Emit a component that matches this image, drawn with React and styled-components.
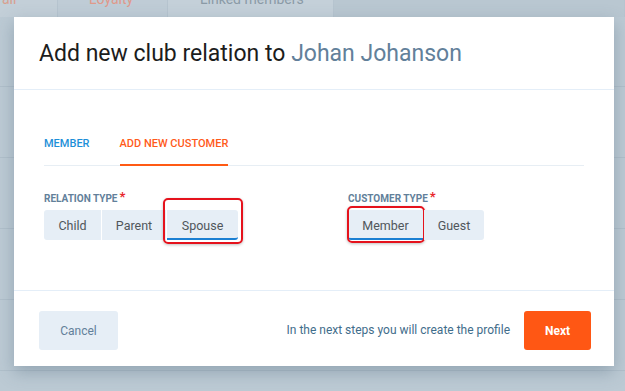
import React from 'react';
import styled, { createGlobalStyle } from 'styled-components';

const GlobalStyle = createGlobalStyle`
  html, body {
    margin: 0;
    padding: 0;
    background: #bccad4;
    font-family: Roboto, "Liberation Sans", Arial, sans-serif;
  }
`;

const Page = styled.div`
  position: relative;
  width: 625px;
  height: 391px;
  overflow: hidden;
  background: #bccad4;
`;

const TabStrip = styled.div`
  display: flex;
  height: 17px;
  overflow: hidden;
`;

const BackTab = styled.div`
  width: ${(p) => p.w}px;
  background: ${(p) => p.bg};
  border-right: 1px solid #b6c4cf;
  color: ${(p) => p.color};
  font-size: 14px;
  line-height: 1;
  padding-left: ${(p) => p.pad}px;
  box-sizing: border-box;
  margin-top: -8px;
  height: 25px;
`;

const Rows = styled.div`
  display: flex;
  flex-direction: column;
`;

const BackRow = styled.div`
  height: 70px;
  border-bottom: 1px solid #b0bfca;
  &:first-child {
    height: 69px;
  }
`;

const Modal = styled.div`
  position: absolute;
  left: 14px;
  top: 17px;
  width: 600px;
  height: 349px;
  background: #fff;
  box-shadow: 0 6px 16px rgba(70, 95, 115, 0.35);
  display: flex;
  flex-direction: column;
`;

const Header = styled.div`
  height: 72px;
  border-bottom: 1px solid #e4eef8;
  padding: 0 25px;
  display: flex;
  align-items: center;
`;

const Title = styled.h2`
  margin: 0;
  margin-top: 1px;
  font-size: 23px;
  font-weight: 400;
  color: #1c1c1c;
`;

const Name = styled.span`
  color: #62809a;
`;

const Body = styled.div`
  flex: 1;
  padding: 47px 30px 0;
`;

const TabBar = styled.div`
  display: flex;
  gap: 30px;
  border-bottom: 1px solid #e7eef4;
`;

const Tab = styled.div`
  font-size: 11px;
  line-height: 13px;
  font-weight: 500;
  text-transform: uppercase;
  color: ${(p) => (p.active ? '#ff5a1a' : '#1d8fd8')};
  padding-bottom: 14px;
  border-bottom: 2px solid ${(p) => (p.active ? '#ff5a14' : 'transparent')};
  margin-bottom: -1px;
`;

const Fields = styled.div`
  display: flex;
  margin-top: 27px;
`;

const Field = styled.div`
  width: ${(p) => p.w}px;
`;

const Label = styled.div`
  font-size: 10px;
  font-weight: 700;
  color: #62809a;
  text-transform: uppercase;
  height: 13px;
  margin-bottom: 4px;
  display: flex;
  align-items: flex-start;
  gap: 2px;
`;

const Star = styled.span`
  color: #e8262b;
  font-size: 13px;
  line-height: 1;
  margin-top: -3px;
`;

const Group = styled.div`
  display: flex;
  gap: 1px;
`;

const Choice = styled.div`
  position: relative;
  height: 30px;
  width: ${(p) => p.w}px;
  box-sizing: border-box;
  background: #e6eef6;
  font-size: 12.5px;
  color: #50565b;
  display: flex;
  align-items: center;
  justify-content: center;
  border-radius: ${(p) => p.radius};
  border-bottom: 2px solid ${(p) => (p.selected ? '#1a7fd2' : 'transparent')};
  padding-top: 2px;
`;

const Highlight = styled.div`
  position: absolute;
  left: ${(p) => p.box[0]}px;
  right: ${(p) => p.box[1]}px;
  top: ${(p) => p.box[2]}px;
  bottom: ${(p) => p.box[3]}px;
  border: 2px solid #e5121c;
  border-radius: 5px;
  box-shadow: 0 1px 3px rgba(0, 0, 0, 0.25);
  pointer-events: none;
`;

const Footer = styled.div`
  height: 76px;
  border-top: 1px solid #e4eef8;
  padding: 20px 23px 0 25px;
  display: flex;
  align-items: flex-start;
  box-sizing: border-box;
`;

const Cancel = styled.button`
  width: 79px;
  height: 39px;
  border: none;
  border-radius: 3px;
  background: #e6eef6;
  color: #62809a;
  font-family: inherit;
  font-size: 12px;
`;

const Hint = styled.div`
  margin-left: auto;
  margin-right: 14px;
  font-size: 12px;
  color: #3f6d8b;
  line-height: 39px;
`;

const Next = styled.button`
  width: 67px;
  height: 39px;
  border: none;
  border-radius: 3px;
  background: #ff5714;
  color: #fff;
  font-family: inherit;
  font-size: 12px;
  font-weight: 700;
`;

const relationTypes = [
  { label: 'Child', w: 57, radius: '3px 0 0 3px' },
  { label: 'Parent', w: 64, radius: '0' },
  { label: 'Spouse', w: 71, radius: '0 3px 3px 0', selected: true, box: [-4, -5, -12, -6] },
];

const customerTypes = [
  { label: 'Member', w: 75, radius: '3px 0 0 3px', selected: true, box: [-1, -2, -4, -5] },
  { label: 'Guest', w: 60, radius: '0 3px 3px 0' },
];

const ChoiceGroup = ({ items }) => (
  <Group>
    {items.map((item) => (
      <Choice key={item.label} w={item.w} radius={item.radius} selected={item.selected}>
        {item.label}
        {item.box && <Highlight box={item.box} />}
      </Choice>
    ))}
  </Group>
);

export default function App() {
  return (
    <Page>
      <GlobalStyle />
      <TabStrip>
        <BackTab w={58} bg="#c3cfd8" color="#d9a08f" pad={2}>all</BackTab>
        <BackTab w={110} bg="#bfccd6" color="#e0998a" pad={31}>Loyalty</BackTab>
        <BackTab w={166} bg="#c4d0d9" color="#8a9aa6" pad={32}>Linked members</BackTab>
        <BackTab w={291} bg="#b9c7d1" color="#8a9aa6" pad={0} />
      </TabStrip>
      <Rows>
        <BackRow />
        <BackRow />
        <BackRow />
        <BackRow />
        <BackRow />
      </Rows>
      <Modal>
        <Header>
          <Title>
            Add new club relation to <Name>Johan Johanson</Name>
          </Title>
        </Header>
        <Body>
          <TabBar>
            <Tab>Member</Tab>
            <Tab active>Add new customer</Tab>
          </TabBar>
          <Fields>
            <Field w={304}>
              <Label>
                Relation type<Star>*</Star>
              </Label>
              <ChoiceGroup items={relationTypes} />
            </Field>
            <Field w={200}>
              <Label>
                Customer type<Star>*</Star>
              </Label>
              <ChoiceGroup items={customerTypes} />
            </Field>
          </Fields>
        </Body>
        <Footer>
          <Cancel>Cancel</Cancel>
          <Hint>In the next steps you will create the profile</Hint>
          <Next>Next</Next>
        </Footer>
      </Modal>
    </Page>
  );
}
